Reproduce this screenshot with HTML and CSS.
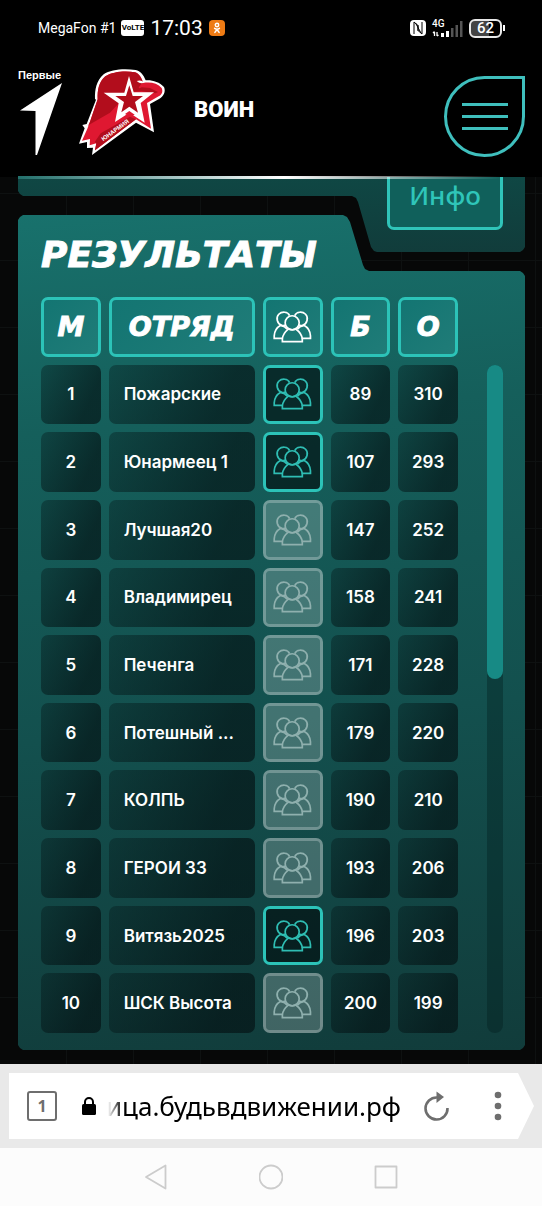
FILE: index.html
```html
<!DOCTYPE html>
<html lang="ru">
<head>
<meta charset="utf-8">
<meta name="viewport" content="width=device-width, initial-scale=1">
<title>Результаты</title>
<link rel="stylesheet" href="styles.css">
</head>
<body>
<svg class="defs" aria-hidden="true">
  <symbol id="team" viewBox="54 64 118 98">
    <g fill="none" stroke="currentColor" stroke-width="5.2">
      <circle cx="112" cy="100" r="21.500"/>
      <path d="M104 78C99 65 80 65 71 74C61 84 66 104 80 108C84 109 88 109 92 107"/>
      <path d="M120 78C125 65 144 65 153 74C163 84 158 104 144 108C140 109 136 109 132 107"/>
      <path d="M82 158V150C83 137 91 127 101 119Q112 124 123 119C134 127 142 137 143 150V158Z"/>
      <path d="M84 148H57V140C58 127 66 114 77 108Q90 110 97 120"/>
      <path d="M141 148H168V140C167 127 159 114 148 108Q134 110 128 120"/>
    </g>
  </symbol>
</svg>

<div class="status">
  <span class="carrier">MegaFon #1</span>
  <span class="volte">VoLTE</span>
  <time class="clock">17:03</time>
  <svg class="ok" viewBox="0 0 16 16"><rect width="16" height="16" rx="4" fill="#ee7b14"/><g fill="none" stroke="#fff" stroke-width="1.5" stroke-linecap="round"><circle cx="8" cy="5" r="1.7"/><path d="M5.6 8.3Q8 10 10.4 8.3M8 9.5L5.9 12.4M8 9.5L10.1 12.4"/></g></svg>
  <span class="spacer"></span>
  <svg class="nfc" viewBox="0 0 16 16"><rect width="16" height="16" rx="4" fill="#fff"/><path d="M4 14V2L8 5.500V11M12 2V14L8 10.500V5M5.500 3L11 13" fill="none" stroke="#000" stroke-width="1"/></svg>
  <span class="network">
    <span class="gen">4G</span>
    <svg class="signal" viewBox="0 0 31 17"><path d="M2.500 12V16M1 13L2.500 11.500M5 12V16M5 16L6.500 15" stroke="#fff" stroke-width="1.300"/><path d="M9 13h3v4H9zM14 11h3v6h-3z" fill="#fff"/><path d="M19 8h2.500v9H19zM23.500 5H26v12h-2.500zM28 1h2.500v16H28z" fill="#555"/></svg>
  </span>
  <span class="battery">62</span>
</div>

<header class="header">
  <a class="pervye" href="#">
    <span>Первые</span>
    <svg viewBox="0 0 44 74"><path d="M43 1L18 73H16.500V29L1 28.500Z" fill="#fff"/></svg>
  </a>
  <a class="eagle" href="#" aria-label="Юнармия">
    <svg viewBox="22 26 264 264">
      <path d="M73 119C72 91 77 65 99 45C121 29 163 27 195 32C209 35 219 47 225 63C242 61 266 67 280 83C286 98 279 111 265 119L238 134L250 219L196 190L64 287L67 265L49 266L49 248L25 253L42 207L35 197L48 194L76 121Z" fill="#fff"/>
      <path d="M81 120C80 92 84 69 104 51C127 36 166 34 193 39C204 43 211 52 217 71C239 67 260 71 273 86C278 98 273 106 264 111L229 131L241 208L196 180L73 273L77 252L57 258L58 239L34 244L50 208L58 187Z" fill="#df1831"/>
      <path d="M81 120C80 92 84 69 104 51C127 36 166 34 193 39C204 43 211 52 217 68L204 84L212 96L187 97L176 120L145 131L118 160L58 195L52 200L58 187Z" fill="#b20d1c"/>
      <path d="M90 222L178 172L196 180L73 273L77 252L72 248Z" fill="#b20d1c"/>
      <path d="M213 84L238 86L262 98L255 102L213 96L204 88Z" fill="#b20d1c"/>
      <path d="M198 65Q212 61 220 69Q211 76 198 65Z" fill="#fff"/>
      <path d="M175 50L189 99H250L210 131L222 190L176 160L133 188L144 132L99 100H161Z" fill="#fff"/>
      <path d="M176 78L186 110H217L193 128L202 160L176 142L152 159L160 128L134 110H166Z" fill="#b20d1c"/>
      <path d="M163 164L176 155L192 166L178 172Z" fill="#df1831"/>
      <text class="eagle-text" x="98" y="246" transform="rotate(-36 98 246)">ЮНАРМИЯ</text>
    </svg>
  </a>
  <a class="voin" href="#">ВОИН</a>
  <span class="spacer"></span>
  <button class="menu" aria-label="Меню"><i></i><i></i><i></i></button>
</header>

<main class="page">
  <section class="info-panel"><button class="info">Инфо</button></section>
  <section class="results">
    <h1>РЕЗУЛЬТАТЫ</h1>
    <div class="board">
      <table>
        <thead><tr><th>М</th><th>ОТРЯД</th><th aria-label="Команда"><svg><use href="#team"/></svg></th><th>Б</th><th>О</th></tr></thead>
        <tbody>
          <tr><td>1</td><td class="name">Пожарские</td><td class="team on"><svg><use href="#team"/></svg></td><td>89</td><td>310</td></tr>
          <tr><td>2</td><td class="name">Юнармеец 1</td><td class="team on"><svg><use href="#team"/></svg></td><td>107</td><td>293</td></tr>
          <tr><td>3</td><td class="name">Лучшая20</td><td class="team"><svg><use href="#team"/></svg></td><td>147</td><td>252</td></tr>
          <tr><td>4</td><td class="name">Владимирец</td><td class="team"><svg><use href="#team"/></svg></td><td>158</td><td>241</td></tr>
          <tr><td>5</td><td class="name">Печенга</td><td class="team"><svg><use href="#team"/></svg></td><td>171</td><td>228</td></tr>
          <tr><td>6</td><td class="name">Потешный ...</td><td class="team"><svg><use href="#team"/></svg></td><td>179</td><td>220</td></tr>
          <tr><td>7</td><td class="name">КОЛПЬ</td><td class="team"><svg><use href="#team"/></svg></td><td>190</td><td>210</td></tr>
          <tr><td>8</td><td class="name">ГЕРОИ 33</td><td class="team"><svg><use href="#team"/></svg></td><td>193</td><td>206</td></tr>
          <tr><td>9</td><td class="name">Витязь2025</td><td class="team on"><svg><use href="#team"/></svg></td><td>196</td><td>203</td></tr>
          <tr><td>10</td><td class="name">ШСК Высота</td><td class="team"><svg><use href="#team"/></svg></td><td>200</td><td>199</td></tr>
        </tbody>
      </table>
      <div class="track"><div class="thumb"></div></div>
    </div>
  </section>
</main>

<div class="browser">
  <div class="address">
    <button class="tabs" aria-label="Вкладки">1</button>
    <svg class="lock" viewBox="0 0 14 18"><path d="M3 8V5a4 4 0 0 1 8 0v3" fill="none" stroke="#000" stroke-width="2"/><rect y="7" width="14" height="11" rx="1.500"/></svg>
    <input class="url" type="text" aria-label="Адрес" value="ица.будьвдвижении.рф">
    <button class="plain" aria-label="Обновить"><svg class="reload" viewBox="0 0 26 30"><path d="M23.500 17A11 11 0 1 1 13 6.500" fill="none" stroke="#6e6e6e" stroke-width="2.600"/><path d="M12.500 0.500L20 6L12.500 12Z" fill="#6e6e6e"/></svg></button>
    <button class="plain more" aria-label="Ещё"><svg viewBox="0 0 8 30" width="8" height="30" fill="#6e6e6e"><circle cx="4" cy="4" r="3.300"/><circle cx="4" cy="15" r="3.300"/><circle cx="4" cy="26" r="3.300"/></svg></button>
  </div>
</div>

<nav class="nav">
  <button class="plain" aria-label="Назад"><svg viewBox="0 0 24 26"><path d="M21.500 1.500V24.500L2 13Z"/></svg></button>
  <button class="plain" aria-label="Домой"><svg viewBox="0 0 24 26"><circle cx="12" cy="13" r="11.500"/></svg></button>
  <button class="plain" aria-label="Недавние"><svg viewBox="0 0 24 26"><rect x="1.500" y="2.500" width="21" height="21"/></svg></button>
</nav>
</body>
</html>
```
FILE: styles.css
```css
* { box-sizing: border-box; }
body {
  margin: 0;
  min-height: 100vh;
  display: flex;
  flex-direction: column;
  background: #000;
  color: #fff;
  font-family: Inter, "Liberation Sans", sans-serif;
}
button { font: inherit; color: inherit; cursor: pointer; }
.defs { position: absolute; width: 0; height: 0; }
.spacer { flex: 1; }

.status {
  display: flex;
  align-items: center;
  height: 56px;
  padding: 0 40px 0 38px;
  font-family: Roboto, sans-serif;
}
.carrier { font-size: 14px; }
.volte {
  margin-left: 5px;
  width: 23px;
  height: 16px;
  border-radius: 3px;
  background: #fff;
  color: #000;
  font: bold 8px/16px Roboto, sans-serif;
  text-align: center;
}
.clock { margin: 0 6px; font-size: 21px; }
.ok { width: 16px; height: 16px; }
.nfc { width: 16px; height: 16px; margin-right: 6px; }
.network { display: grid; width: 31px; margin-right: 6px; }
.gen { grid-area: 1 / 1; font-size: 10px; line-height: 8px; font-weight: 500; }
.signal { grid-area: 1 / 1; width: 31px; height: 17px; }
.battery {
  position: relative;
  width: 33px;
  height: 19px;
  border: 2px solid #e8e8e8;
  border-radius: 6px;
  background: linear-gradient(90deg, #444 62%, #000 62%);
  font-size: 15px;
  font-weight: 500;
  line-height: 15px;
  text-align: center;
}
.battery::after {
  content: "";
  position: absolute;
  right: -5px;
  top: 4px;
  width: 2px;
  height: 6px;
  background: #fff;
}

.header {
  position: relative;
  display: flex;
  align-items: flex-start;
  height: 121px;
  padding: 12px 17px 0 18px;
}
.header::after {
  content: "";
  position: absolute;
  z-index: 1;
  left: 18px;
  right: 40px;
  bottom: -2px;
  height: 3px;
  background: linear-gradient(90deg, #23706c, #fff 55%, transparent);
}
.pervye {
  width: 46px;
  color: #fff;
  text-decoration: none;
  font: bold 11px/14px "Liberation Sans", sans-serif;
}
.pervye svg { display: block; width: 44px; height: 74px; margin-left: 1px; }
.eagle { margin-left: 14px; }
.eagle svg { display: block; width: 88px; height: 88px; }
.eagle-text { font: bold 18px "Liberation Sans", sans-serif; fill: #fff; }
.voin {
  margin: 24px 0 0 28px;
  color: #fff;
  text-decoration: none;
  font: 900 22px/36px Roboto, sans-serif;
}
.menu {
  display: flex;
  flex-direction: column;
  align-items: center;
  justify-content: center;
  gap: 9px;
  width: 81px;
  height: 81px;
  margin-top: 8px;
  padding: 0;
  border: 3px solid #3fbfbd;
  border-radius: 50% 0 50% 50%;
  background: none;
}
.menu i { width: 46px; height: 3px; background: #3fbfbd; }

.page {
  flex: 1;
  display: flex;
  flex-direction: column;
  padding: 0 17px 14px 18px;
  background:
    repeating-linear-gradient(90deg, transparent 0 66px, #0e1111 66px 67px),
    repeating-linear-gradient(0deg, transparent 0 66px, #0e1111 66px 67px),
    #070808;
}
.info-panel {
  display: flex;
  justify-content: flex-end;
  height: 75px;
  padding-right: 22px;
  background: linear-gradient(180deg, #0f4744, #113c3b);
  clip-path: polygon(0 0, 100% 0, 100% 70px, calc(100% - 2px) 73px, calc(100% - 5px) 75px, 359px 75px, 356px 74px, 353px 70px, 340px 25px, 338px 21px, 334px 19px, 5px 19px, 2px 17px, 0 14px);
}
.info {
  width: 116px;
  height: 53px;
  padding: 0 0 15px;
  border: 3px solid #30c4b9;
  border-top: 0;
  border-radius: 0 0 7px 7px;
  background: #10605b;
  color: #2fc5b9;
  font: 500 26px/36px "Noto Sans", sans-serif;
}
.results {
  flex: 1;
  display: flex;
  flex-direction: column;
  margin-top: -37px;
  padding: 0 22px 17px 23px;
  background: linear-gradient(175deg, #18716c 0%, #155f5b 25%, #13504e 60%, #113c3b 100%);
  clip-path: polygon(0 5px, 2px 2px, 5px 0, 325px 0, 329px 2px, 332px 7px, 345px 50px, 347px 54px, 351px 56px, calc(100% - 5px) 56px, calc(100% - 2px) 58px, 100% 61px, 100% calc(100% - 5px), calc(100% - 2px) calc(100% - 2px), calc(100% - 5px) 100%, 5px 100%, 2px calc(100% - 2px), 0 calc(100% - 5px));
}
h1 {
  margin: 0;
  padding-top: 20px;
  height: 82px;
  font: italic bold 36px/40px "DejaVu Sans", sans-serif;
  -webkit-text-stroke: 1px #fff;
}
.board { flex: 1; display: flex; gap: 29px; }
table {
  flex: 1;
  display: grid;
  grid-template-columns: 20fr 49fr 20fr 20fr 20fr;
  grid-auto-rows: 1fr;
  gap: 8px;
}
thead, tbody, tr { display: contents; }
th, td {
  display: flex;
  align-items: center;
  justify-content: center;
  min-width: 0;
  padding: 0;
  border-radius: 7px;
}
th {
  border: 3px solid #2cc3b8;
  background: linear-gradient(135deg, #137572, #207c78);
  font: italic bold 27px/32px "DejaVu Sans", sans-serif;
  -webkit-text-stroke: 1px #fff;
}
td {
  background: linear-gradient(115deg, rgba(3, 20, 22, .35), rgba(3, 16, 18, .65) 75%);
  font-size: 17px;
  font-weight: 600;
}
.name { justify-content: flex-start; padding-left: 15px; white-space: nowrap; }
table svg { width: 39px; height: 32px; }
.team {
  border: 3px solid rgba(255, 255, 255, .4);
  background: rgba(255, 255, 255, .2);
  background-clip: padding-box;
  color: #8fb0ae;
}
.team.on { border-color: #2cc3b8; background: rgba(2, 14, 16, .65); color: #2fbdb3; }
.track {
  width: 16px;
  margin-top: 68px;
  border-radius: 8px;
  background: rgba(0, 25, 25, .35);
}
.thumb { height: 47%; border-radius: 8px; background: #178a85; }

.browser { padding: 9px 8px 9px 9px; background: #e9e9e9; }
.address {
  display: flex;
  align-items: center;
  height: 66px;
  padding: 0 32px 0 18px;
  background: #fff;
  clip-path: polygon(0 0, calc(100% - 16px) 0, 100% 50%, calc(100% - 16px) 100%, 0 100%);
}
.tabs {
  width: 30px;
  height: 30px;
  padding: 0;
  border: 2px solid #6e6e6e;
  border-radius: 3px;
  background: none;
  color: #6e6e6e;
  font: bold 16px/26px "Open Sans", sans-serif;
}
.lock { width: 14px; height: 18px; margin-left: 25px; }
.url {
  flex: 1;
  min-width: 0;
  height: 44px;
  margin: 0 0 0 4px;
  padding: 0;
  border: 0;
  outline: 0;
  background: none;
  color: #000;
  font: 26px/44px "Noto Sans", sans-serif;
  text-align: right;
  mask-image: linear-gradient(90deg, transparent 8px, #000 22px);
}
.plain { display: flex; padding: 0; border: 0; background: none; }
.reload { width: 26px; height: 30px; margin-left: 23px; }
.more { margin-left: 44px; }

.nav {
  display: flex;
  justify-content: center;
  align-items: center;
  gap: 91px;
  height: 58px;
  background: #fcfcfc;
}
.nav svg { width: 24px; height: 26px; fill: none; stroke: #ccc; stroke-width: 1.8; stroke-linejoin: round; }
```
